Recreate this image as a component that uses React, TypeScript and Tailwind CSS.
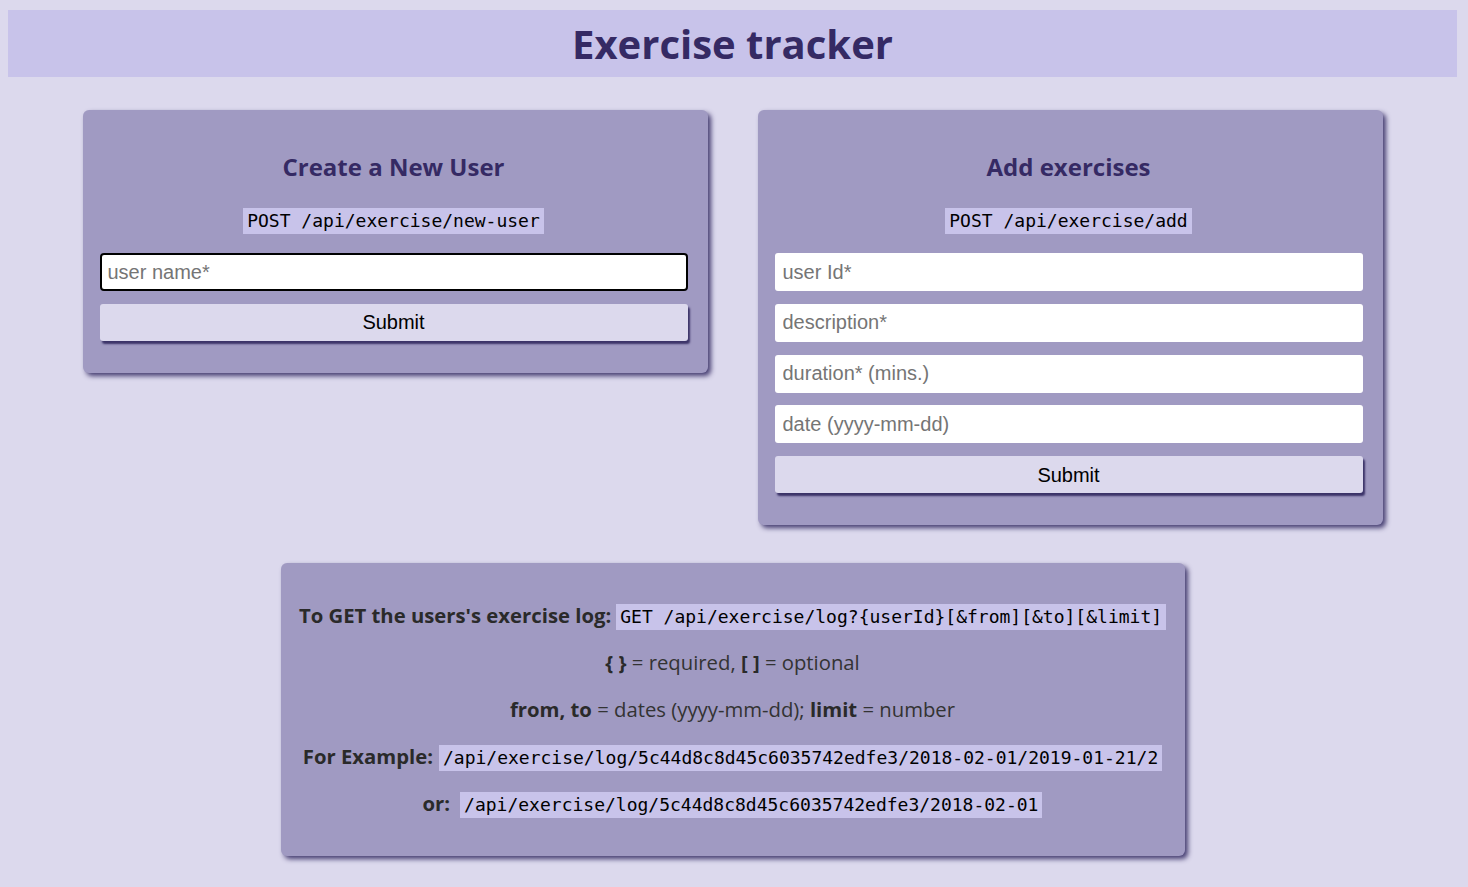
import React from 'react';

const Code: React.FC<{ children: React.ReactNode }> = ({ children }) => (
  <code className="inline-block bg-[#c8c3ea] text-black px-[4px] h-[26px] leading-[26px] text-[18px] font-['DejaVu_Sans_Mono',monospace] whitespace-nowrap">
    {children}
  </code>
);

const Field: React.FC<{ placeholder: string; focused?: boolean }> = ({ placeholder, focused }) => (
  <input
    type="text"
    placeholder={placeholder}
    className={
      focused
        ? 'w-full h-[38px] rounded-[4px] bg-white border-2 border-black px-[6px] text-[20px] font-["Liberation_Sans",Arial,sans-serif] placeholder:text-[#757575] outline-none'
        : 'w-full h-[38px] rounded-[3px] bg-white px-[8px] text-[20px] font-["Liberation_Sans",Arial,sans-serif] placeholder:text-[#757575] outline-none'
    }
  />
);

const SubmitButton: React.FC = () => (
  <button
    type="button"
    className="w-full h-[37px] rounded-[3px] bg-[#dcd9ed] text-black text-[20px] font-['Liberation_Sans',Arial,sans-serif] shadow-[2px_3px_2px_#3b3368]"
  >
    Submit
  </button>
);

const Card: React.FC<{ title: string; endpoint: string; children: React.ReactNode }> = ({ title, endpoint, children }) => (
  <div className="w-[625px] rounded-md bg-[#a09ac2] shadow-[3px_3px_5px_#463e72] pl-[17px] pr-[20px] pt-[41px] pb-[32px] flex flex-col items-center">
    <h2 className="text-[24px] leading-[32px] font-bold text-[#352a64]">{title}</h2>
    <div className="mt-[25px] mb-[19px] h-[26px]">
      <Code>{endpoint}</Code>
    </div>
    <form className="w-full flex flex-col gap-[12.75px]" onSubmit={(e) => e.preventDefault()}>
      {children}
    </form>
  </div>
);

const App: React.FC = () => {
  return (
    <div className="min-h-screen bg-[#dcd9ed] pl-2 pr-[11px] pt-[10px] pb-8 font-['Open_Sans',sans-serif]">
      <header className="h-[67px] bg-[#c8c3ea] flex items-center justify-center">
        <h1 className="text-[40px] font-bold text-[#352a64] leading-none">Exercise tracker</h1>
      </header>

      <div className="mt-[33px] flex items-start justify-center gap-[50px]">
        <Card title="Create a New User" endpoint="POST /api/exercise/new-user">
          <Field placeholder="user name*" focused />
          <SubmitButton />
        </Card>
        <Card title="Add exercises" endpoint="POST /api/exercise/add">
          <Field placeholder="user Id*" />
          <Field placeholder="description*" />
          <Field placeholder="duration* (mins.)" />
          <Field placeholder="date (yyyy-mm-dd)" />
          <SubmitButton />
        </Card>
      </div>

      <div className="mt-[38px] flex justify-center">
        <div className="w-[904px] rounded-md bg-[#a09ac2] shadow-[3px_3px_5px_#463e72] px-[15px] py-[39px] flex flex-col gap-[20px] text-[20.3px] text-[#333333]">
          <p className="h-[27px] flex items-center justify-center whitespace-nowrap">
            <b className="text-[#2a2a2a]">To GET the users's exercise log:</b>
            <span className="ml-[5px]">
              <Code>GET /api/exercise/log?{'{userId}'}[&amp;from][&amp;to][&amp;limit]</Code>
            </span>
          </p>
          <p className="h-[27px] flex items-center justify-center whitespace-pre">
            <b className="text-[#2a2a2a]">{'{ }'}</b> = required, <b className="text-[#2a2a2a]">[ ]</b> = optional
          </p>
          <p className="h-[27px] flex items-center justify-center whitespace-pre">
            <b className="text-[#2a2a2a]">from, to</b> = dates (yyyy-mm-dd); <b className="text-[#2a2a2a]">limit</b> = number
          </p>
          <p className="h-[27px] flex items-center justify-center whitespace-nowrap">
            <b className="text-[#2a2a2a]">For Example:</b>
            <span className="ml-[6px]">
              <Code>/api/exercise/log/5c44d8c8d45c6035742edfe3/2018-02-01/2019-01-21/2</Code>
            </span>
          </p>
          <p className="h-[27px] flex items-center justify-center whitespace-nowrap">
            <b className="text-[#2a2a2a]">or:</b>
            <span className="ml-[10px]">
              <Code>/api/exercise/log/5c44d8c8d45c6035742edfe3/2018-02-01</Code>
            </span>
          </p>
        </div>
      </div>
    </div>
  );
};

export default App;
